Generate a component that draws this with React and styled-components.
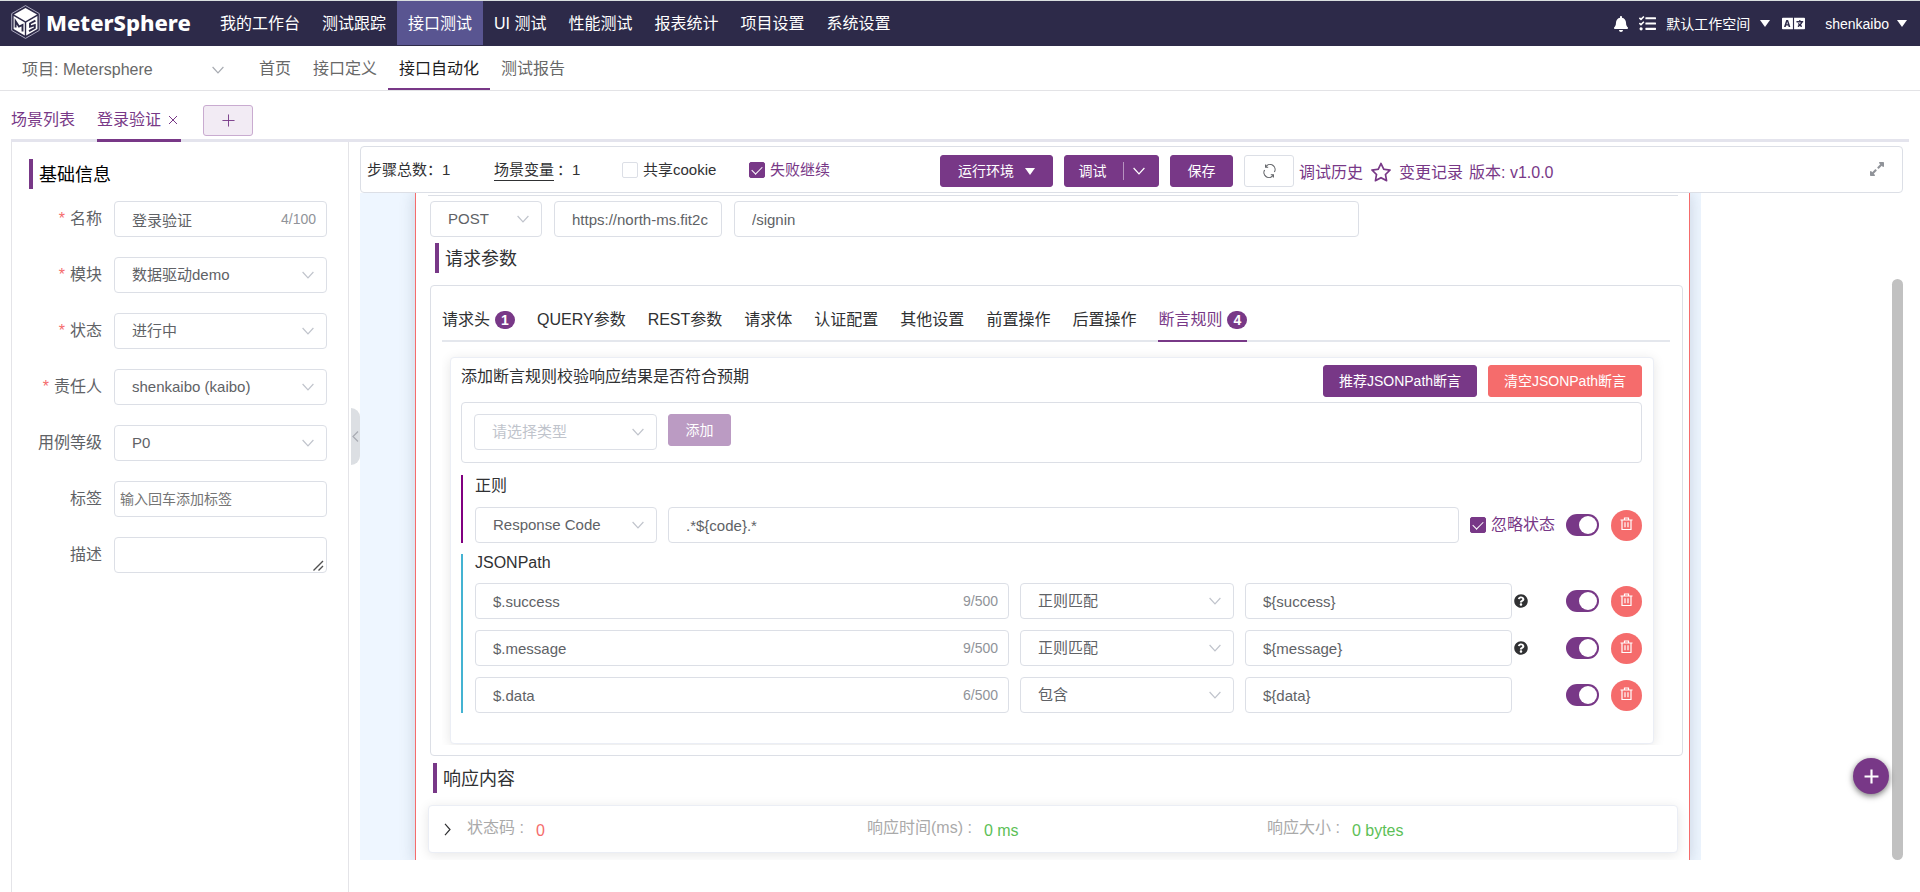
import React, { useState } from "react";
import styled, { createGlobalStyle, css } from "styled-components";
import { FaBell, FaTasks, FaLanguage, FaQuestionCircle, FaExpandAlt } from "react-icons/fa";
import { AiOutlineStar } from "react-icons/ai";

const purple = "#783887";
const line = "#dcdfe6";
const danger = "#f56c6c";

const GlobalStyle = createGlobalStyle`
  * { box-sizing: border-box; }
  body {
    margin: 0;
    background: #fff;
    color: #303133;
    font: 16px/20px "Liberation Sans", "Noto Sans CJK SC", sans-serif;
  }
  button, input, select, textarea { font: inherit; color: inherit; margin: 0; }
  button { cursor: pointer; }
  a { color: inherit; text-decoration: none; }
`;

/* ---------- page frame ---------- */

const Page = styled.div`
  height: 100vh;
  display: flex;
  flex-direction: column;
  overflow: hidden;
`;

const TopBar = styled.header`
  display: flex;
  align-items: stretch;
  height: 46px;
  flex: none;
  border-top: 1px solid #d9dfdf;
  background: #2d2a49;
  color: #fff;
`;

const Brand = styled.a`
  display: flex;
  align-items: center;
  gap: 6px;
  width: 209px;
  padding: 0 0 3px 11px;
  font: 800 22px/30px "Noto Sans", sans-serif;
`;

const TopNav = styled.nav`
  display: flex;
`;

const TopLink = styled.a`
  display: flex;
  align-items: center;
  padding: 2px 11px 0;
  margin-bottom: 1px;
  white-space: nowrap;
  background: ${(p) => (p.$active ? "#595591" : "transparent")};
`;

const TopTools = styled.div`
  display: flex;
  align-items: center;
  margin-left: auto;
  padding: 0 13px 0 0;
  font-size: 14px;
`;

const IconButton = styled.button`
  display: flex;
  padding: 0;
  border: 0;
  background: none;
  color: ${(p) => p.$color || "#fff"};
  margin-right: ${(p) => p.$gap || 0}px;
`;

const MenuButton = styled.button`
  display: flex;
  align-items: center;
  gap: ${(p) => p.$gap}px;
  padding: 0;
  border: 0;
  background: none;
`;

const Caret = styled.span`
  border: solid transparent;
  border-width: 7px 5px 0;
  border-top-color: #fff;
`;

const SubBar = styled.div`
  display: flex;
  flex: none;
  height: 45px;
  padding-left: 22px;
  border-bottom: 1px solid #e3e3e6;
  color: #686868;
`;

const ProjectPicker = styled.button`
  display: flex;
  align-items: center;
  justify-content: space-between;
  width: 202px;
  margin-right: 24px;
  padding: 3px 0 0;
  border: 0;
  background: none;
`;

const SubLink = styled.a`
  display: flex;
  align-items: center;
  padding: 3px 11px 0;
  border-bottom: 2px solid ${(p) => (p.$active ? purple : "transparent")};
  color: ${(p) => (p.$active ? "#1d1d1f" : "inherit")};
`;

const DocTabs = styled.div`
  display: flex;
  flex: none;
  margin: 0 11px;
  padding-top: 8px;
  border-bottom: 3px solid #e4e4ed;
  color: ${purple};
`;

const DocTab = styled.div`
  display: flex;
  align-items: center;
  gap: 7px;
  height: 43px;
  margin: 0 22px -3px 0;
  padding: 2px 3px 0 0;
  border-bottom: 3px solid ${(p) => (p.$active ? purple : "transparent")};
`;

const PlainTab = styled(DocTab)`
  margin-right: 19px;
`;

const AddTab = styled.button`
  display: flex;
  align-items: center;
  justify-content: center;
  width: 50px;
  height: 31px;
  margin-top: 6px;
  border: 1px solid #c9abd0;
  border-radius: 3px;
  background: #f2ebf4;
  color: ${purple};
`;

const Workspace = styled.div`
  display: flex;
  flex: 1;
  min-height: 0;
  margin: 0 17px 0 11px;
`;

/* ---------- form controls ---------- */

const fieldBox = css`
  width: 100%;
  height: 36px;
  padding: 0 12px 0 17px;
  border: 1px solid ${line};
  border-radius: 4px;
  background: #fff;
  color: ${(p) => (p.$muted ? "#c0c4cc" : "#606266")};
  font-size: 15px;
  outline: none;
`;

const Input = styled.input`
  ${fieldBox}
`;

const SelectBox = styled.select`
  ${fieldBox}
  appearance: none;
`;

const TagInput = styled(Input)`
  padding: 0 5px;
  font-size: 14px;
  &::placeholder { color: #757575; }
`;

const TextArea = styled.textarea`
  ${fieldBox}
  display: block;
  resize: none;
`;

const FieldWrap = styled.div`
  position: relative;
  display: flex;
  min-width: 0;
  flex: ${(p) => (p.$width ? "none" : 1)};
  width: ${(p) => (p.$width ? p.$width + "px" : "auto")};
`;

const FieldEnd = styled.span`
  position: absolute;
  top: 0;
  right: ${(p) => p.$right || 13}px;
  height: 36px;
  display: flex;
  align-items: center;
  color: #909399;
  font-size: 14px;
  pointer-events: none;
`;

const ResizeGrip = styled.svg`
  position: absolute;
  right: 3px;
  bottom: 2px;
  pointer-events: none;
`;

const Check = styled.input`
  appearance: none;
  display: grid;
  place-items: center;
  flex: none;
  width: 16px;
  height: 16px;
  border: 1px solid ${line};
  border-radius: 2px;
  background: #fff;
  &:checked {
    background: ${purple};
    border-color: ${purple};
  }
  &:checked::after {
    content: "";
    width: 5px;
    height: 9px;
    margin-top: -2px;
    border: solid #fff;
    border-width: 0 1px 1px 0;
    transform: rotate(45deg);
  }
`;

const CheckLabel = styled.label`
  display: flex;
  align-items: center;
  gap: 5px;
  color: ${(p) => (p.$on ? purple : "inherit")};
  white-space: nowrap;
`;

const Toggle = styled.input`
  appearance: none;
  display: flex;
  align-items: center;
  flex: none;
  width: 33px;
  height: 22px;
  padding: 0 2px;
  border-radius: 11px;
  background: ${line};
  &::after {
    content: "";
    width: 18px;
    height: 18px;
    border-radius: 50%;
    background: #fff;
  }
  &:checked {
    justify-content: flex-end;
    background: ${purple};
  }
`;

const DeleteButton = styled.button`
  display: grid;
  place-items: center;
  flex: none;
  width: 31px;
  height: 31px;
  padding: 0 0 2px;
  border: 0;
  border-radius: 50%;
  background: ${danger};
  color: #fff;
`;

const Button = styled.button`
  display: flex;
  align-items: center;
  justify-content: center;
  gap: ${(p) => p.$gap || 0}px;
  flex: none;
  width: ${(p) => p.$width}px;
  height: 32px;
  padding: 0;
  border: 1px solid ${(p) => p.$border || p.$bg || purple};
  border-radius: 3px;
  background: ${(p) => p.$bg || purple};
  color: ${(p) => p.$color || "#fff"};
  font-size: 14px;
  white-space: nowrap;
`;

/* ---------- left panel ---------- */

const SidePanel = styled.aside`
  width: 338px;
  flex: none;
  padding: 17px 21px 0 0;
  border: solid #e4e4e8;
  border-width: 0 1px;
`;

const Heading = styled.h2`
  margin: 0 0 12px ${(p) => p.$indent}px;
  padding: 2px 0 0 6px;
  border-left: 4px solid ${purple};
  font-size: 18px;
  line-height: 28px;
  font-weight: 400;
  color: ${(p) => (p.$dark ? "#000" : "inherit")};
`;

const FormRow = styled.div`
  display: flex;
  margin-bottom: 20px;
`;

const FormLabel = styled.label`
  width: 90px;
  margin-right: 12px;
  text-align: right;
  line-height: 36px;
  color: #606266;
  &::before {
    content: ${(p) => (p.$required ? '"*"' : "none")};
    margin-right: 5px;
    color: ${danger};
  }
`;

const PanelHandle = styled.button`
  align-self: flex-start;
  display: grid;
  place-items: center;
  width: 9px;
  height: 57px;
  margin: 266px 0 0 2px;
  padding: 0;
  border: 0;
  border-radius: 0 9px 9px 0;
  background: #dcdfe3;
  color: #a8abb2;
`;

/* ---------- editor ---------- */

const Editor = styled.main`
  flex: 1;
  min-width: 0;
  display: flex;
  flex-direction: column;
  padding: 4px 0 32px;
`;

const Toolbar = styled.div`
  display: grid;
  grid-template-columns: 127px 128px 127px 191px 1fr;
  flex: none;
  height: 47px;
  padding: 8px 17px 0 6px;
  border: 1px solid ${line};
  border-radius: 4px;
  font-size: 15px;
`;

const VarLink = styled.a`
  display: inline-block;
  margin-right: 3px;
  border-bottom: 1px solid #303133;
`;

const ToolbarCell = styled.div`
  height: 30px;
  display: flex;
  align-items: center;
`;

const Actions = styled.div`
  display: flex;
  align-items: center;
  gap: 11px;
  height: 32px;
`;

const ActionLinks = styled.div`
  display: flex;
  align-items: center;
  gap: 6px;
  margin-left: -6px;
  padding-top: 4px;
  font-size: 16px;
  color: ${purple};
  white-space: nowrap;
`;

const Split = styled.i`
  width: 1px;
  height: 18px;
  background: #b793bf;
`;

const DebugText = styled.span`
  margin-right: 7px;
`;

const PushRight = styled.div`
  margin: 0 0 5px auto;
`;

const ScrollArea = styled.div`
  display: flex;
  flex: 1;
  min-height: 0;
`;

const StepCanvas = styled.div`
  flex: 1;
  min-width: 0;
  overflow: hidden;
  margin-right: 191px;
  padding: 0 11px 0 55px;
  background: #eef6ff;
`;

const ScrollThumb = styled.div`
  width: 11px;
  margin-top: 86px;
  border-radius: 6px;
  background: #c1c1c1;
`;

const StepCard = styled.section`
  padding: 2px 6px 9px 12px;
  border: solid ${danger};
  border-width: 0 1px 1px;
  border-radius: 0 0 4px 4px;
  background: #fff;
  box-shadow: 0 0 16px rgba(60, 80, 110, 0.22);
`;

const Rule = styled.hr`
  height: 1px;
  margin: 0 5px 5px 0;
  border: 0;
  background: ${line};
`;

const RequestRow = styled.div`
  display: flex;
  gap: 12px;
  margin: 0 324px 6px 2px;
`;

const ParamBox = styled.div`
  margin: 0 0 7px 2px;
  padding: 12px 12px 10px 11px;
  border: 1px solid ${line};
  border-radius: 4px;
`;

const ParamTabs = styled.nav`
  display: flex;
  gap: 22px;
  border-bottom: 2px solid #e4e7ed;
`;

const ParamTab = styled.a`
  display: flex;
  align-items: center;
  gap: 5px;
  height: 44px;
  padding-top: 2px;
  margin-bottom: -2px;
  border-bottom: 2px solid ${(p) => (p.$active ? purple : "transparent")};
  color: ${(p) => (p.$active ? purple : "inherit")};
  white-space: nowrap;
`;

const Badge = styled.span`
  width: 20px;
  height: 18px;
  border-radius: 9px;
  background: ${purple};
  color: #fff;
  font-size: 14px;
  font-weight: 700;
  line-height: 18px;
  text-align: center;
`;

const ShadowClip = styled.div`
  overflow: hidden;
  padding: 15px 16px 1px 8px;
`;

const AssertCard = styled.div`
  padding: 7px 11px 30px 10px;
  border: 1px solid #ebeef5;
  border-radius: 4px;
  background: #fff;
  box-shadow: 0 2px 12px rgba(0, 0, 0, 0.1);
`;

const AssertHead = styled.div`
  display: flex;
  gap: 11px;
  margin-bottom: 5px;
  line-height: 24px;
`;

const AssertTitle = styled.span`
  flex: 1;
`;

const AddBox = styled.div`
  display: flex;
  gap: 11px;
  height: 61px;
  margin-bottom: 12px;
  padding: 11px 12px;
  border: 1px solid ${line};
  border-radius: 4px;
`;

const RuleGroup = styled.div`
  display: flex;
  flex-direction: column;
  gap: 11px;
  margin-bottom: 11px;
  padding-left: 12px;
  border-left: 2px solid ${(p) => p.$color};
  &:last-child { margin-bottom: 0; }
`;

const RuleName = styled.div`
  line-height: ${(p) => (p.$tight ? 18 : 21)}px;
`;

const RuleRow = styled.div`
  display: flex;
  align-items: center;
  gap: 11px;
`;

const RuleTail = styled.div`
  display: flex;
  align-items: center;
  gap: 12px;
  width: ${(p) => (p.$wide ? 172 : 128)}px;
  margin-left: ${(p) => (p.$wide ? 0 : -9)}px;
`;

const TailLead = styled.span`
  display: flex;
  flex: 1;
  min-width: 0;
`;

const ResponseCard = styled.div`
  display: flex;
  align-items: center;
  gap: 16px;
  height: 48px;
  margin-right: 5px;
  padding: 0 10px 0 15px;
  border: 1px solid #ebeef5;
  border-radius: 4px;
  background: #fff;
  box-shadow: 0 2px 12px rgba(0, 0, 0, 0.1);
`;

const Stats = styled.dl`
  display: grid;
  grid-template-columns: repeat(3, 1fr);
  flex: 1;
  margin: 0;
`;

const Stat = styled.div`
  display: flex;
  gap: 12px;
  dt { color: #aaa; }
  dd { margin: 0; padding-top: 3px; color: ${(p) => p.$color}; }
`;

const Fab = styled.button`
  position: fixed;
  right: 31px;
  bottom: 98px;
  display: grid;
  place-items: center;
  width: 36px;
  height: 36px;
  padding: 0;
  border: 0;
  border-radius: 50%;
  background: ${purple};
  color: #fff;
  box-shadow: 0 2px 6px rgba(0, 0, 0, 0.55);
`;

/* ---------- drawings ---------- */

const LangIcon = styled(FaLanguage).attrs({ size: 23 })`
  margin-left: 12px;
`;

const Chevron = ({ color = "#c0c4cc" }) => (
  <svg width="12" height="8" viewBox="0 0 12 8" fill="none" stroke={color} strokeWidth="1.2">
    <path d="M.6 1 6 6.8 11.4 1" />
  </svg>
);

const Side = ({ left }) => (
  <svg width="7" height="13" viewBox="0 0 7 13" fill="none" stroke="currentColor" strokeWidth="1.2">
    <path d={left ? "M6 1.5 1 6.5 6 11.5" : "M1 .8 6 6.5 1 12.2"} />
  </svg>
);

const Plus = ({ size, weight }) => (
  <svg width={size} height={size} viewBox="0 0 14 14" stroke="currentColor" strokeWidth={weight}>
    <path d="M7 .5v13M.5 7h13" />
  </svg>
);

const Close = () => (
  <svg width="10" height="10" viewBox="0 0 10 10" stroke="currentColor" strokeWidth="1">
    <path d="M1 1l8 8M9 1L1 9" />
  </svg>
);

const Trash = () => (
  <svg width="13" height="14" viewBox="0 0 13 14" fill="none" stroke="currentColor" strokeWidth="1.2">
    <path d="M.5 3h12M4.500 3V1h4v2M2 3v9.500h9V3M5 5.200v5M8 5.200v5" />
  </svg>
);

const Refresh = () => (
  <svg width="13" height="14" viewBox="0 0 13 14" fill="none" stroke="#606266" strokeWidth="1.1">
    <path d="M3 2.600A5 5 0 0 1 11.400 8M10 11.400A5 5 0 0 1 1.600 6" />
    <path d="M2.600.6v2.600h2.600M10.400 13.400v-2.600H7.800" />
  </svg>
);

const Cube = () => (
  <svg width="29" height="34" viewBox="0 0 29 34">
    <path d="M14.5.6 28.3 8.6v16.8l-13.8 8L.7 25.400V8.600z" fill="none" stroke="#b9b7cc" strokeWidth=".9" />
    <path d="M14.500 3 26 9.600l-11.500 6.600L3 9.600z" fill="#fff" />
    <path d="M2.600 11 13.800 17.400v13L2.600 24z" fill="#fff" />
    <path d="M26.400 11 15.200 17.400v13L26.400 24z" fill="#fff" />
    <path d="M4.600 22.500v-6.300l3.400 5.400 3.500-1.600v6.400" fill="none" stroke="#2d2a49" strokeWidth="1.900" />
    <path d="M24.400 15.600l-5.400 2.900v3.200l4.800-1.700v3l-5.800 3.200" fill="none" stroke="#2d2a49" strokeWidth="1.900" />
  </svg>
);

/* ---------- composed controls ---------- */

function Select({ id, label, value, width, muted }) {
  return (
    <FieldWrap $width={width}>
      <SelectBox id={id} aria-label={label} defaultValue={value} $muted={muted}>
        <option>{value}</option>
      </SelectBox>
      <FieldEnd>
        <Chevron />
      </FieldEnd>
    </FieldWrap>
  );
}

function Text({ id, label, value, width, count }) {
  return (
    <FieldWrap $width={width}>
      <Input id={id} aria-label={label} defaultValue={value} />
      {count && <FieldEnd $right={11}>{count}</FieldEnd>}
    </FieldWrap>
  );
}

function CheckField({ label, initial }) {
  const [on, setOn] = useState(initial);
  return (
    <CheckLabel $on={on}>
      <Check type="checkbox" checked={on} onChange={() => setOn(!on)} />
      {label}
    </CheckLabel>
  );
}

function Tail({ wide, children }) {
  return (
    <RuleTail $wide={wide}>
      <TailLead>{children}</TailLead>
      <Toggle type="checkbox" role="switch" aria-label="启用" defaultChecked />
      <DeleteButton aria-label="删除">
        <Trash />
      </DeleteButton>
    </RuleTail>
  );
}

const topItems = ["我的工作台", "测试跟踪", "接口测试", "UI 测试", "性能测试", "报表统计", "项目设置", "系统设置"];
const subItems = ["首页", "接口定义", "接口自动化", "测试报告"];
const paramItems = [
  ["请求头", 1],
  ["QUERY参数"],
  ["REST参数"],
  ["请求体"],
  ["认证配置"],
  ["其他设置"],
  ["前置操作"],
  ["后置操作"],
  ["断言规则", 4],
];
const jsonRules = [
  ["$.success", "9/500", "正则匹配", "${success}", true],
  ["$.message", "9/500", "正则匹配", "${message}", true],
  ["$.data", "6/500", "包含", "${data}", false],
];
const selects = [
  ["module", "模块", "数据驱动demo", true],
  ["status", "状态", "进行中", true],
  ["owner", "责任人", "shenkaibo (kaibo)", true],
  ["level", "用例等级", "P0", false],
];

export default function App() {
  return (
    <Page>
      <GlobalStyle />
      <TopBar>
        <Brand href="#">
          <Cube />
          MeterSphere
        </Brand>
        <TopNav>
          {topItems.map((t) => (
            <TopLink key={t} href="#" $active={t === "接口测试"}>
              {t}
            </TopLink>
          ))}
        </TopNav>
        <TopTools>
          <IconButton aria-label="通知" $gap={10}>
            <FaBell size={16} />
          </IconButton>
          <IconButton aria-label="任务" $gap={10}>
            <FaTasks size={17} />
          </IconButton>
          <MenuButton $gap={10}>
            默认工作空间
            <Caret />
          </MenuButton>
          <IconButton aria-label="语言" $gap={20}>
            <LangIcon />
          </IconButton>
          <MenuButton $gap={8}>
            shenkaibo
            <Caret />
          </MenuButton>
        </TopTools>
      </TopBar>

      <SubBar>
        <ProjectPicker>
          项目: Metersphere
          <Chevron color="#a8abb2" />
        </ProjectPicker>
        {subItems.map((t) => (
          <SubLink key={t} href="#" $active={t === "接口自动化"}>
            {t}
          </SubLink>
        ))}
      </SubBar>

      <DocTabs>
        <PlainTab>
          <a href="#">场景列表</a>
        </PlainTab>
        <DocTab $active>
          <a href="#">登录验证</a>
          <IconButton aria-label="关闭" $color={purple}>
            <Close />
          </IconButton>
        </DocTab>
        <AddTab aria-label="新建">
          <Plus size={13} weight={1} />
        </AddTab>
      </DocTabs>

      <Workspace>
        <SidePanel>
          <Heading $indent={17} $dark>
            基础信息
          </Heading>
          <FormRow>
            <FormLabel htmlFor="name" $required>
              名称
            </FormLabel>
            <Text id="name" value="登录验证" count="4/100" />
          </FormRow>
          {selects.map(([id, label, value, required]) => (
            <FormRow key={id}>
              <FormLabel htmlFor={id} $required={required}>
                {label}
              </FormLabel>
              <Select id={id} value={value} />
            </FormRow>
          ))}
          <FormRow>
            <FormLabel htmlFor="tags">标签</FormLabel>
            <FieldWrap>
              <TagInput id="tags" placeholder="输入回车添加标签" />
            </FieldWrap>
          </FormRow>
          <FormRow>
            <FormLabel htmlFor="desc">描述</FormLabel>
            <FieldWrap>
              <TextArea id="desc" />
              <ResizeGrip width="11" height="11" viewBox="0 0 11 11" stroke="#505050" strokeWidth="1.4">
                <path d="M.5 10.500l9.500-9.500M5.500 10.500L10 6" />
              </ResizeGrip>
            </FieldWrap>
          </FormRow>
        </SidePanel>
        <PanelHandle aria-label="收起">
          <Side left />
        </PanelHandle>

        <Editor>
          <Toolbar>
            <ToolbarCell>步骤总数：1</ToolbarCell>
            <ToolbarCell>
              <VarLink href="#">场景变量</VarLink>：1
            </ToolbarCell>
            <ToolbarCell>
              <CheckField label="共享cookie" initial={false} />
            </ToolbarCell>
            <ToolbarCell>
              <CheckField label="失败继续" initial />
            </ToolbarCell>
            <Actions>
              <Button $width={113} $gap={11}>
                运行环境
                <Caret />
              </Button>
              <Button $width={95} $gap={9}>
                <DebugText>调试</DebugText>
                <Split />
                <Chevron color="#fff" />
              </Button>
              <Button $width={63}>保存</Button>
              <Button $width={50} $bg="#fff" $border={line} aria-label="刷新">
                <Refresh />
              </Button>
              <ActionLinks>
                <a href="#">调试历史</a>
                <IconButton aria-label="关注" $color={purple}>
                  <AiOutlineStar size={24} />
                </IconButton>
                <a href="#">变更记录</a>
                <span>版本: v1.0.0</span>
              </ActionLinks>
              <PushRight>
                <IconButton aria-label="全屏" $color="#909399">
                  <FaExpandAlt size={16} />
                </IconButton>
              </PushRight>
            </Actions>
          </Toolbar>

          <ScrollArea>
            <StepCanvas>
              <StepCard>
                <Rule />
                <RequestRow>
                  <Select label="请求方法" value="POST" width={112} />
                  <Text label="域名" value="https://north-ms.fit2c" width={168} />
                  <Text label="路径" value="/signin" />
                </RequestRow>
                <Heading $indent={7}>请求参数</Heading>
                <ParamBox>
                  <ParamTabs>
                    {paramItems.map(([t, n]) => (
                      <ParamTab key={t} href="#" $active={t === "断言规则"}>
                        {t}
                        {n && <Badge>{n}</Badge>}
                      </ParamTab>
                    ))}
                  </ParamTabs>
                  <ShadowClip>
                    <AssertCard>
                      <AssertHead>
                        <AssertTitle>添加断言规则校验响应结果是否符合预期</AssertTitle>
                        <Button $width={154}>推荐JSONPath断言</Button>
                        <Button $width={154} $bg={danger}>
                          清空JSONPath断言
                        </Button>
                      </AssertHead>
                      <AddBox>
                        <Select label="断言类型" value="请选择类型" width={183} muted />
                        <Button $width={63} $bg="#bb9bc3">
                          添加
                        </Button>
                      </AddBox>
                      <RuleGroup $color="#800080">
                        <RuleName>正则</RuleName>
                        <RuleRow>
                          <Select label="断言对象" value="Response Code" width={182} />
                          <Text label="正则表达式" value=".*${code}.*" />
                          <Tail wide>
                            <CheckField label="忽略状态" initial />
                          </Tail>
                        </RuleRow>
                      </RuleGroup>
                      <RuleGroup $color="#44b3d2">
                        <RuleName $tight>JSONPath</RuleName>
                        {jsonRules.map(([path, count, mode, expected, help]) => (
                          <RuleRow key={path}>
                            <Text label="JSONPath" value={path} count={count} />
                            <Select label="匹配方式" value={mode} width={214} />
                            <Text label="期望值" value={expected} width={267} />
                            <Tail>{help && <FaQuestionCircle size={14} />}</Tail>
                          </RuleRow>
                        ))}
                      </RuleGroup>
                    </AssertCard>
                  </ShadowClip>
                </ParamBox>
                <Heading $indent={5}>响应内容</Heading>
                <ResponseCard>
                  <Side />
                  <Stats>
                    <Stat $color={danger}>
                      <dt>状态码 :</dt>
                      <dd>0</dd>
                    </Stat>
                    <Stat $color="#5dbf57">
                      <dt>响应时间(ms) :</dt>
                      <dd>0 ms</dd>
                    </Stat>
                    <Stat $color="#5dbf57">
                      <dt>响应大小 :</dt>
                      <dd>0 bytes</dd>
                    </Stat>
                  </Stats>
                </ResponseCard>
              </StepCard>
            </StepCanvas>
            <ScrollThumb />
          </ScrollArea>
        </Editor>
      </Workspace>
      <Fab aria-label="添加步骤">
        <Plus size={15} weight={2} />
      </Fab>
    </Page>
  );
}
